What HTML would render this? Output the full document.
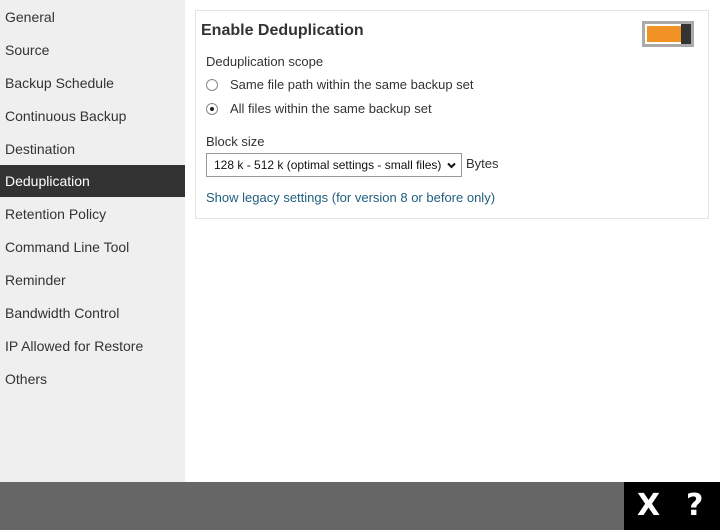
<html><head><style>
body{margin:0;width:720px;height:530px;position:relative;font-family:"Liberation Sans",sans-serif;background:#fff;overflow:hidden}
.side{position:absolute;left:0;top:0;width:185px;height:482px;background:#efefef}
.it{position:absolute;left:0;width:185px;height:32px;line-height:32px;padding-left:5px;font-size:14px;color:#333;box-sizing:border-box}
.sel{background:#333;color:#fff}
.box{position:absolute;left:195px;top:10px;width:514px;height:209px;border:1px solid #e3e3e3;box-sizing:border-box}
.t{position:absolute;font-size:14px;color:#333;white-space:nowrap}
.bar{position:absolute;left:0;top:482px;width:624px;height:48px;background:#666}
.blk{position:absolute;left:624px;top:482px;width:96px;height:48px;background:#000;color:#fff;font-weight:bold;font-size:30px;font-family:"DejaVu Sans",sans-serif}
.r{position:absolute;width:12px;height:12px;border:1px solid #888;border-radius:50%;box-sizing:border-box;background:#fff}
</style></head><body>
<div class="side">
<div class="it" style="top:1px">General</div>
<div class="it" style="top:34px">Source</div>
<div class="it" style="top:67px">Backup Schedule</div>
<div class="it" style="top:100px">Continuous Backup</div>
<div class="it" style="top:133px">Destination</div>
<div class="it sel" style="top:165px">Deduplication</div>
<div class="it" style="top:198px">Retention Policy</div>
<div class="it" style="top:231px">Command Line Tool</div>
<div class="it" style="top:264px">Reminder</div>
<div class="it" style="top:297px">Bandwidth Control</div>
<div class="it" style="top:330px">IP Allowed for Restore</div>
<div class="it" style="top:363px">Others</div>
</div>
<div class="box"></div>
<div class="t" style="left:201px;top:22px;font-size:16px;font-weight:bold">Enable Deduplication</div>
<div style="position:absolute;left:642px;top:21px;width:52px;height:26px;background:#aaa;box-sizing:border-box;padding:2px">
<div style="position:absolute;left:3px;top:3px;width:46px;height:20px;background:#fff"></div>
<div style="position:absolute;left:5px;top:5px;width:34px;height:16px;background:#f39224"></div>
<div style="position:absolute;left:39px;top:3px;width:10px;height:20px;background:#333"></div>
</div>
<div class="t" style="left:206px;top:54px;font-size:13px">Deduplication scope</div>
<div class="r" style="left:206px;top:79px"></div>
<div class="t" style="left:230px;top:77px;font-size:13px">Same file path within the same backup set</div>
<div class="r" style="left:206px;top:103px"><div style="position:absolute;left:3px;top:3px;width:4px;height:4px;border-radius:50%;background:#222"></div></div>
<div class="t" style="left:230px;top:101px;font-size:13px">All files within the same backup set</div>
<div class="t" style="left:206px;top:134px;font-size:13px">Block size</div>
<div style="position:absolute;left:206px;top:153px;width:256px;height:24px;border:1px solid #999;box-sizing:border-box;font-size:12px;line-height:22px;padding-left:7px;color:#111">128 k - 512 k (optimal settings - small files)<svg style="position:absolute;right:5px;top:8px" width="9" height="7" viewBox="0 0 9 7"><path d="M1 1.5 L4.5 5 L8 1.5" fill="none" stroke="#111" stroke-width="2"/></svg></div>
<div class="t" style="left:466px;top:156px;font-size:13px">Bytes</div>
<div class="t" style="left:206px;top:190px;font-size:13px;color:#1f5f7f">Show legacy settings (for version 8 or before only)</div>
<div class="bar"></div>
<div class="blk"><span style="position:absolute;left:13px;top:6px">X</span><span style="position:absolute;left:62px;top:6px">?</span></div>
</body></html>
